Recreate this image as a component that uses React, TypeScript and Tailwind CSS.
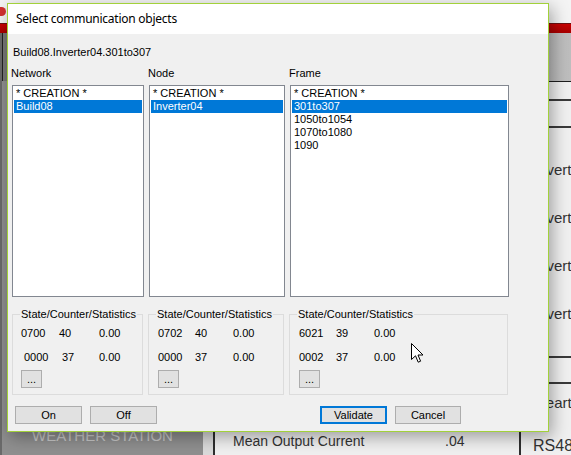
import type { ReactNode } from 'react';

type Item = { label: string; selected?: boolean };

const networkItems: Item[] = [{ label: '* CREATION *' }, { label: 'Build08', selected: true }];
const nodeItems: Item[] = [{ label: '* CREATION *' }, { label: 'Inverter04', selected: true }];
const frameItems: Item[] = [
  { label: '* CREATION *' },
  { label: '301to307', selected: true },
  { label: '1050to1054' },
  { label: '1070to1080' },
  { label: '1090' },
];

const navItems = ['OVERVIEW', 'INVERTERS', 'STRINGS', 'METERS', 'ALARMS', 'REPORTS', 'SETTINGS'];

function ListBox({ items }: { items: Item[] }) {
  return (
    <div className="h-[212px] border border-[#828790] bg-white p-[1px]">
      {items.map((it) => (
        <div
          key={it.label}
          className={
            it.selected
              ? 'h-[13px] leading-[13px] pl-[2px] bg-[#0078d7] text-white'
              : 'h-[13px] leading-[13px] pl-[2px] text-black'
          }
        >
          {it.label}
        </div>
      ))}
    </div>
  );
}

function WinButton({ children, className }: { children: ReactNode; className: string }) {
  return (
    <button
      className={
        'h-[18px] shrink-0 flex items-center justify-center bg-[#e1e1e1] text-black text-[11px] leading-none ' + className
      }
    >
      {children}
    </button>
  );
}

function Group({ children }: { children: ReactNode }) {
  return (
    <fieldset className="border border-[#dcdcdc] p-0 pb-[6px] min-w-0">
      <legend className="ml-[7px] px-[1px] leading-[13px]">State/Counter/Statistics</legend>
      {children}
    </fieldset>
  );
}

function Cursor() {
  return (
    <svg className="absolute left-[411px] top-[343px]" width="13" height="21" viewBox="0 0 13 21">
      <path
        d="M0.5 0.5 L0.5 16.5 L4.5 12.8 L7.2 19.2 L9.6 18.2 L7 12 L12 12 Z"
        fill="#ffffff"
        stroke="#000000"
        strokeWidth="1"
      />
    </svg>
  );
}

export default function App() {
  return (
    <div className="relative w-[571px] h-[455px] overflow-hidden bg-[#f0f0f0] font-['Liberation_Sans',Arial,sans-serif]">
      {/* application behind the dialog */}
      <div className="h-[23px] bg-[#f4f4f4] flex items-start">
        <div className="mt-[7px] w-[6px] h-[9px] rounded-r-full bg-[#d23030]" />
      </div>
      <div className="h-[10px] border-t border-[#6b1010] bg-gradient-to-b from-[#c80000] to-[#a80000]" />
      <div className="flex h-[422px] overflow-hidden">
        <div className="w-[203px] shrink-0 flex flex-col bg-[#8f8f8f] border-l-[2px] border-[#6a6a6a]">
          <div className="h-[48px] shrink-0 bg-[#777777] border-l border-[#222]" />
          {navItems.map((n) => (
            <div key={n} className="h-[47px] shrink-0 flex items-center justify-center text-[15px] text-[#c6c6c6]">
              {n}
            </div>
          ))}
          <div className="h-[52px] shrink-0 flex items-center justify-center text-[15px] text-[#c8c8c8]">
            WEATHER STATION
          </div>
        </div>
        <div className="w-[10px] shrink-0 bg-[#dadada]" />
        <div className="w-[306px] shrink-0 border-l-[2px] border-[#2e2e2e] flex flex-col">
          <div className="h-[48px] shrink-0 bg-[#c2c2c2] border-b border-[#1e1e1e]" />
          <div className="flex-1" />
          <div className="h-[28px] shrink-0 flex items-center text-[14px] text-[#333]">
            <span className="ml-[18px] w-[212px]">Mean Output Current</span>
            <span>.04</span>
          </div>
        </div>
        <div className="w-[100px] shrink-0 border-l-[2px] border-[#2e2e2e] flex flex-col text-[15px] text-[#333]">
          <div className="h-[49px] shrink-0 bg-gradient-to-r from-[#b8b8b8] to-[#c4c4c4] border-b border-[#1e1e1e]" />
          <div className="mt-[17px] h-[2px] shrink-0 bg-[#3a3a3a]" />
          <div className="mt-[25px] h-[2px] shrink-0 bg-[#3a3a3a]" />
          <div className="mt-[18px] shrink-0 flex flex-col">
            {['Inverter 01', 'Inverter 02', 'Inverter 03', 'Inverter 04'].map((t) => (
              <div key={t} className="h-[48px] shrink-0 flex items-center pl-[13px] whitespace-nowrap">
                {t}
              </div>
            ))}
          </div>
          <div className="mt-[18px] h-[2px] shrink-0 bg-[#3a3a3a]" />
          <div className="mt-[24px] h-[2px] shrink-0 bg-[#3a3a3a]" />
          <div className="h-[38px] shrink-0 flex items-center pl-[14px]">Heartbeat</div>
          <div className="h-[46px] shrink-0 flex items-center pl-[12px] pt-[2px] text-[16px]">RS485</div>
        </div>
      </div>

      {/* dialog */}
      <div className="absolute left-[7px] top-[3px] w-[542px] h-[429px] border border-[#a2d13a] bg-[#f0f0f0] flex flex-col shadow-[3px_5px_16px_rgba(0,0,0,0.35)]">
        <div className="h-[30px] shrink-0 bg-white flex items-center pl-[8px] pb-[1px] font-['Noto_Sans',sans-serif] text-[12px] tracking-[-0.25px] text-black">
          Select communication objects
        </div>
        <div className="flex-1 flex flex-col pl-[4px] pt-[12px] text-[11px] text-black">
          <div className="h-[13px] leading-[13px] ml-[1px]">Build08.Inverter04.301to307</div>
          <div className="mt-[8px] grid grid-cols-[132px_136px_219px] gap-x-[5px] h-[13px] leading-[13px] -ml-[1px]">
            <span>Network</span>
            <span>Node</span>
            <span>Frame</span>
          </div>
          <div className="mt-[5px] grid grid-cols-[132px_136px_219px] gap-x-[5px]">
            <ListBox items={networkItems} />
            <ListBox items={nodeItems} />
            <ListBox items={frameItems} />
          </div>
          <div className="mt-[11px] grid grid-cols-[131px_136px_219px] gap-x-[5px]">
            <Group>
              <div className="mt-[6px] flex h-[13px] leading-[13px] pl-[8px]">
                <span className="w-[38px]">0700</span>
                <span className="w-[40px]">40</span>
                <span>0.00</span>
              </div>
              <div className="mt-[11px] flex h-[13px] leading-[13px] pl-[11px]">
                <span className="w-[38px]">0000</span>
                <span className="w-[37px]">37</span>
                <span>0.00</span>
              </div>
              <WinButton className="mt-[6px] ml-[8px] w-[21px] border border-[#adadad]">...</WinButton>
            </Group>
            <Group>
              <div className="mt-[6px] flex h-[13px] leading-[13px] pl-[9px]">
                <span className="w-[37px]">0702</span>
                <span className="w-[38px]">40</span>
                <span>0.00</span>
              </div>
              <div className="mt-[11px] flex h-[13px] leading-[13px] pl-[9px]">
                <span className="w-[37px]">0000</span>
                <span className="w-[38px]">37</span>
                <span>0.00</span>
              </div>
              <WinButton className="mt-[6px] ml-[9px] w-[21px] border border-[#adadad]">...</WinButton>
            </Group>
            <Group>
              <div className="mt-[6px] flex h-[13px] leading-[13px] pl-[9px]">
                <span className="w-[37px]">6021</span>
                <span className="w-[38px]">39</span>
                <span>0.00</span>
              </div>
              <div className="mt-[11px] flex h-[13px] leading-[13px] pl-[9px]">
                <span className="w-[37px]">0002</span>
                <span className="w-[38px]">37</span>
                <span>0.00</span>
              </div>
              <WinButton className="mt-[6px] ml-[9px] w-[21px] border border-[#adadad]">...</WinButton>
            </Group>
          </div>
          <div className="mt-[11px] flex">
            <WinButton className="ml-[3px] w-[67px] border border-[#adadad]">On</WinButton>
            <WinButton className="ml-[8px] w-[67px] border border-[#adadad]">Off</WinButton>
            <WinButton className="ml-[163px] w-[67px] border-2 border-[#0078d7]">Validate</WinButton>
            <WinButton className="ml-[8px] w-[66px] border border-[#adadad]">Cancel</WinButton>
          </div>
        </div>
      </div>

      <Cursor />
    </div>
  );
}
